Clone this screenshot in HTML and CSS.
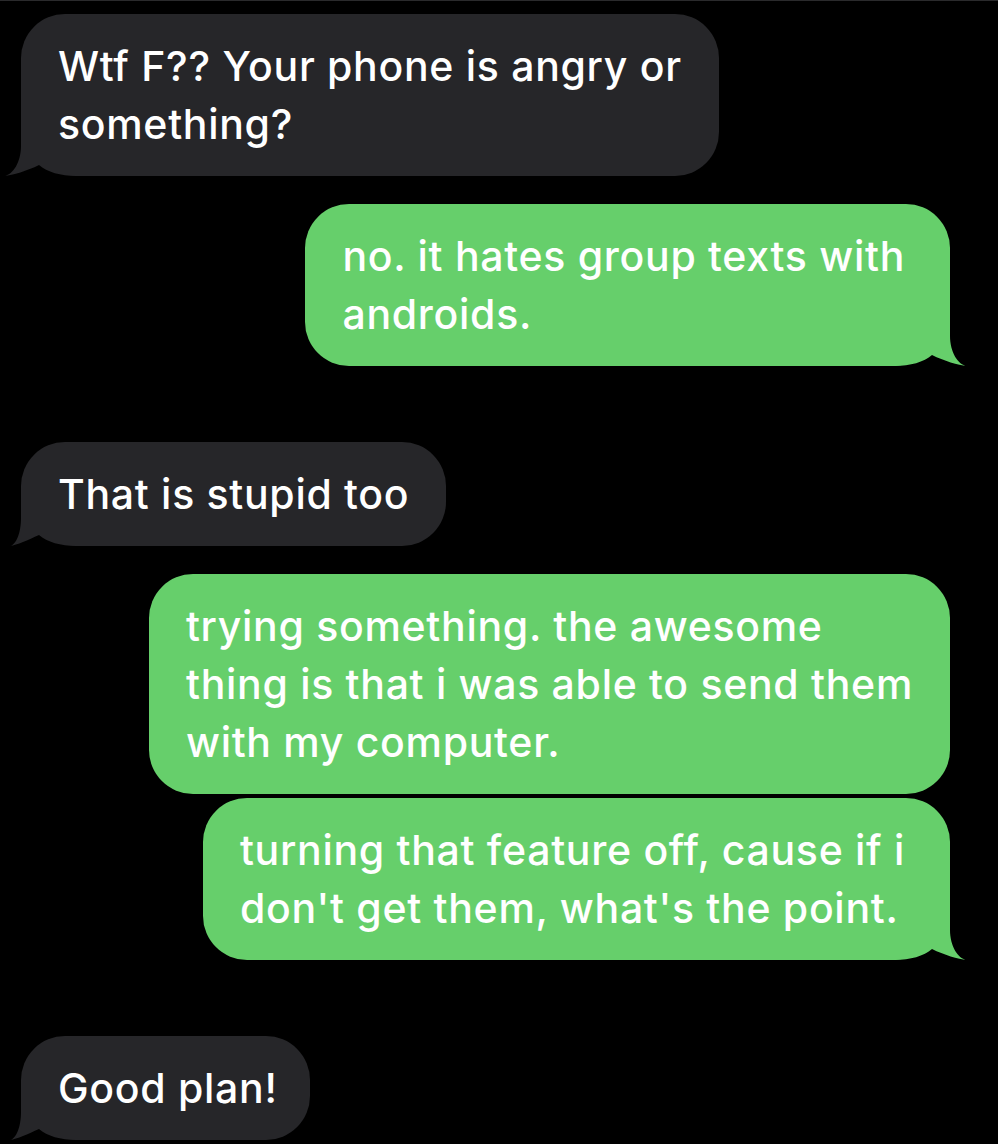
FILE: index.html
```html
<!DOCTYPE html>
<html lang="en">
<head>
<meta charset="utf-8">
<title>Messages</title>
<link rel="stylesheet" href="styles.css">
</head>
<body>
<div class="thread">
  <div class="msg in tailed first">
    <svg class="tail" viewBox="-60 -60 78 60" width="78" height="60"><path d="M0,-60 L0,-30 C0,-14 8,-1 17,0 C8,-1 -6,-5 -18,-11 C-26,-4 -40,0 -55,0 L-60,0 L-60,-60 Z"/></svg>
    <span class="text">Wtf F?? Your phone is angry or<br>something?</span>
  </div>
  <div class="msg out tailed slack">
    <svg class="tail" viewBox="-60 -60 78 60" width="78" height="60"><path d="M0,-60 L0,-30 C0,-14 8,-1 17,0 C8,-1 -6,-5 -18,-11 C-26,-4 -40,0 -55,0 L-60,0 L-60,-60 Z"/></svg>
    <span class="text">no. it hates group texts with<br>androids.</span>
  </div>
  <div class="msg in tailed far">
    <svg class="tail" viewBox="-60 -60 78 60" width="78" height="60"><path d="M0,-60 L0,-28 C0,-13 5,-1 11,0 C4,-1 -7,-6 -18,-11 C-26,-4 -40,0 -55,0 L-60,0 L-60,-60 Z"/></svg>
    <span class="text">That is stupid too</span>
  </div>
  <div class="msg out">
    <span class="text">trying something. the awesome<br>thing is that i was able to send them<br>with my computer.</span>
  </div>
  <div class="msg out tailed close slack">
    <svg class="tail" viewBox="-60 -60 78 60" width="78" height="60"><path d="M0,-60 L0,-30 C0,-14 8,-1 17,0 C8,-1 -6,-5 -18,-11 C-26,-4 -40,0 -55,0 L-60,0 L-60,-60 Z"/></svg>
    <span class="text">turning that feature off, cause if i<br>don't get them, what's the point.</span>
  </div>
  <div class="msg in tailed far snug">
    <svg class="tail" viewBox="-60 -60 78 60" width="78" height="60"><path d="M0,-60 L0,-28 C0,-13 5,-1 11,0 C4,-1 -7,-6 -18,-11 C-26,-4 -40,0 -55,0 L-60,0 L-60,-60 Z"/></svg>
    <span class="text">Good plan!</span>
  </div>
</div>
</body>
</html>
```

FILE: styles.css
```css
html, body {
  margin: 0;
  padding: 0;
  background: #000;
}

body {
  border-top: 1px solid #2a2a2c;
  font-family: Inter, "Noto Sans", "Liberation Sans", sans-serif;
  color: #fff;
  overflow: hidden;
  height: 1143px;
}

.thread {
  display: flex;
  flex-direction: column;
  padding: 13px 48px 0 21px;
}

.msg {
  position: relative;
  box-sizing: border-box;
  padding: 23px 37px;
  font-size: 41px;
  font-weight: 500;
  letter-spacing: 0.7px;
  line-height: 58px;
  border-radius: 44px;
  white-space: nowrap;
  margin-top: 28px;
}

.text {
  position: relative;
  z-index: 1;
}

.msg.first {
  margin-top: 0;
}

.msg.far {
  margin-top: 76px;
}

.msg.close {
  margin-top: 4px;
}

.msg.slack {
  padding-right: 45px;
}

.msg.snug {
  padding-right: 32px;
}

.msg.in {
  align-self: flex-start;
  background: #262629;
}

.msg.out {
  align-self: flex-end;
  background: #66cf6b;
}

.tail {
  position: absolute;
  bottom: 0;
  display: block;
  z-index: 0;
}

.msg.out .tail {
  right: -18px;
  fill: #66cf6b;
}

.msg.in .tail {
  left: -18px;
  fill: #262629;
  transform: scaleX(-1);
}

.msg.out.tailed {
  border-bottom-right-radius: 60px;
}

.msg.in.tailed {
  border-bottom-left-radius: 60px;
}
```
